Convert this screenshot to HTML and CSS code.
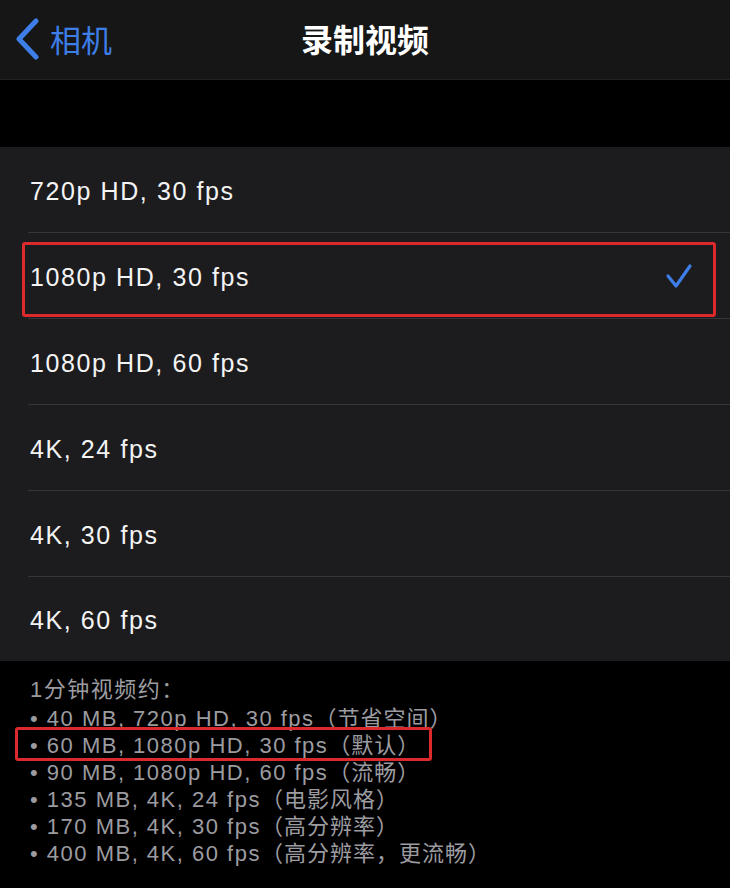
FILE: index.html
```html
<!DOCTYPE html>
<html lang="zh-CN">
<head>
    <meta charset="UTF-8">
    <meta name="viewport" content="width=device-width, initial-scale=1.0">
    <title>录制视频</title>
    <link rel="stylesheet" href="styles.css">
</head>
<body>

    <!-- Navigation bar -->
    <header class="nav">
        <a class="back" href="#">
            <svg class="chevron" viewBox="0 0 26 42" width="26" height="42">
                <path d="M22 3 L5 21 L22 39" fill="none" stroke="#3d7ee8" stroke-width="5" stroke-linecap="round" stroke-linejoin="round"/>
            </svg>
            <span>相机</span>
        </a>
        <h1 class="title">录制视频</h1>
        <div></div>
    </header>

    <div class="spacer"></div>

    <!-- Format options -->
    <ul class="options">
        <li class="option">720p HD, 30 fps</li>
        <li class="option">
            1080p HD, 30 fps
            <svg class="check" viewBox="0 0 28 26" width="28" height="26">
                <path d="M3 13 L11 23 L25 3" fill="none" stroke="#3d7ee8" stroke-width="3.2" stroke-linecap="round" stroke-linejoin="round"/>
            </svg>
            <span class="mark mark-row"></span>
        </li>
        <li class="option">1080p HD, 60 fps</li>
        <li class="option">4K, 24 fps</li>
        <li class="option">4K, 30 fps</li>
        <li class="option">4K, 60 fps</li>
    </ul>

    <!-- Size notes -->
    <div class="notes">
        <p class="notes-head">1分钟视频约：</p>
        <ul class="notes-list">
            <li>• 40 MB, 720p HD, 30 fps<span class="cjk">（节省空间）</span></li>
            <li>• 60 MB, 1080p HD, 30 fps<span class="cjk">（默认）</span><span class="mark mark-note"></span></li>
            <li>• 90 MB, 1080p HD, 60 fps<span class="cjk">（流畅）</span></li>
            <li>• 135 MB, 4K, 24 fps<span class="cjk">（电影风格）</span></li>
            <li>• 170 MB, 4K, 30 fps<span class="cjk">（高分辨率）</span></li>
            <li>• 400 MB, 4K, 60 fps<span class="cjk">（高分辨率，更流畅）</span></li>
        </ul>
    </div>

</body>
</html>
```

FILE: styles.css
```css
/* General styling */
body {
    margin: 0;
    padding: 0;
    background-color: #000;
    color: #f4f4f4;
    font-family: "Liberation Sans", "Noto Sans CJK SC", sans-serif;
    width: 730px;
    min-height: 888px;
}

ul {
    list-style: none;
    margin: 0;
    padding: 0;
}

/* Navigation bar */
.nav {
    height: 80px;
    box-sizing: border-box;
    background-color: #161616;
    border-bottom: 1px solid #222;
    display: grid;
    grid-template-columns: 1fr auto 1fr;
    align-items: center;
}

.back {
    display: flex;
    align-items: center;
    gap: 10px;
    padding-left: 14px;
    color: #3d7ee8;
    text-decoration: none;
    font-family: "Noto Sans CJK SC", sans-serif;
    font-size: 31px;
    line-height: 1;
    margin-top: -2px;
}

.title {
    margin: 0;
    font-family: "Noto Sans CJK SC", sans-serif;
    font-size: 32px;
    font-weight: 700;
    color: #fff;
    line-height: 1;
    margin-top: -4px;
}

.spacer {
    height: 67px;
}

/* Format options */
.options {
    background-color: #1c1c1e;
}

.option {
    position: relative;
    height: 86px;
    box-sizing: border-box;
    margin-left: 28px;
    padding: 3px 37px 0 2px;
    border-bottom: 1px solid #363638;
    display: flex;
    align-items: center;
    justify-content: space-between;
    font-size: 25px;
    letter-spacing: 1.6px;
}

.option:last-child {
    border-bottom: none;
    height: 84px;
}

.check {
    display: block;
    margin-top: -3px;
}

/* Red annotation boxes */
.mark {
    position: absolute;
    box-sizing: border-box;
    border: 3px solid #dc2a2c;
    border-radius: 3px;
}

.mark-row {
    top: 9px;
    bottom: 1px;
    left: -6px;
    right: 14px;
}

.mark-note {
    top: -3px;
    left: -15px;
    width: 417px;
    height: 34px;
}

/* Size notes */
.notes {
    padding: 15px 0 0 30px;
    color: #9c9ca0;
}

.notes-head {
    margin: 0;
    height: 27px;
    font-size: 22px;
    line-height: 27px;
    letter-spacing: 1.5px;
}

.notes-list li {
    position: relative;
    height: 27px;
    font-size: 22px;
    line-height: 27px;
    letter-spacing: 1.5px;
    white-space: nowrap;
}

.cjk {
    font-family: "Noto Sans CJK SC", sans-serif;
    font-size: 22px;
    letter-spacing: 1px;
}
```
